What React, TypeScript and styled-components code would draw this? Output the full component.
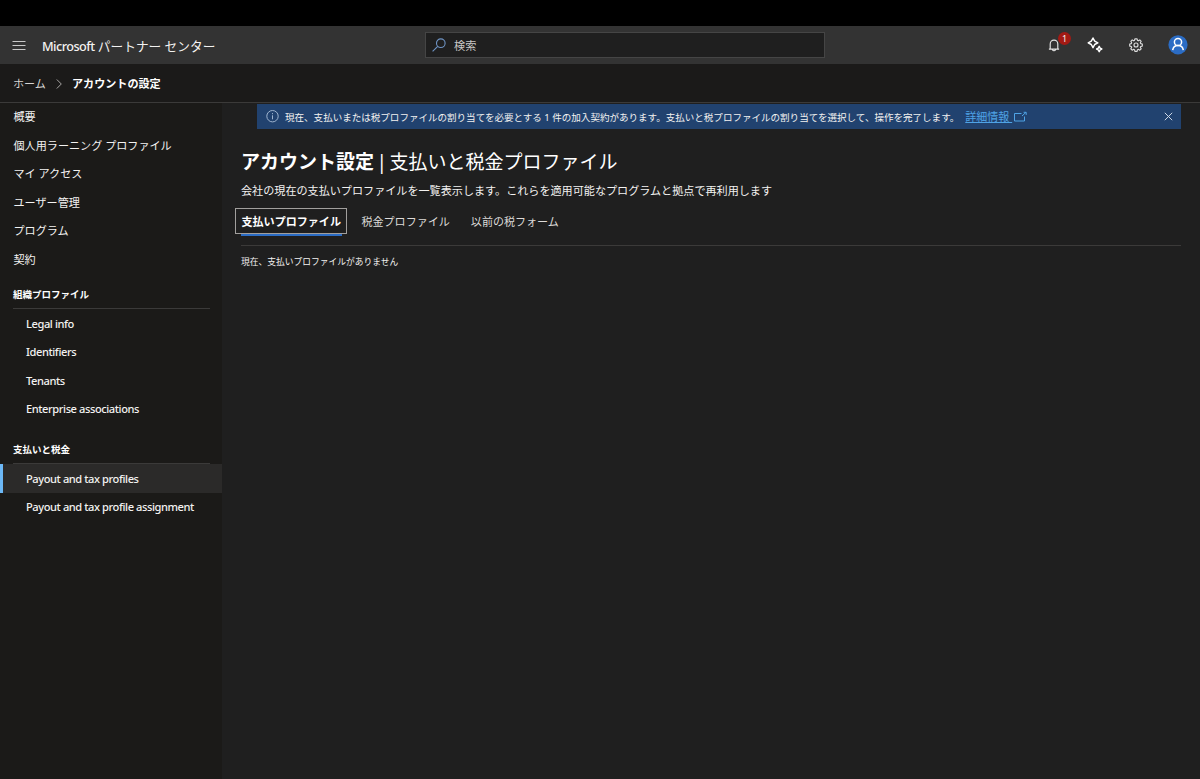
import React from "react";
import styled, { createGlobalStyle } from "styled-components";

const Global = createGlobalStyle`
  * { box-sizing: border-box; }
  html, body { margin: 0; padding: 0; background: #000; }
  body {
    font-family: "Noto Sans", "Noto Sans CJK JP", sans-serif;
    color: #f3f2f1;
    overflow: hidden;
  }
  svg { display: block; flex: none; }
`;

const Page = styled.div`
  width: 1200px;
  height: 779px;
  padding-top: 26px;
  display: flex;
  flex-direction: column;
  background: #000;
  white-space: nowrap;
`;

const Header = styled.header`
  height: 38px;
  flex: none;
  display: grid;
  grid-template-columns: 425px 400px 1fr;
  align-items: center;
  background: #333333;
`;

const Brand = styled.div`
  display: flex;
  align-items: center;
  gap: 16px;
  padding-left: 12px;
  font-size: 12.7px;
  line-height: 20px;

  > span { padding-top: 2px; }
`;

const Latin = styled.span<{ $track?: number }>`
  font-weight: 500;
  letter-spacing: ${(p) => p.$track ?? 0}px;
`;

const SearchBox = styled.div`
  height: 26px;
  display: flex;
  align-items: center;
  gap: 8px;
  padding-left: 6px;
  border: 1px solid #454545;
  background: #1f1f1f;
  color: #c8c6c4;
  font-size: 11.2px;
  line-height: 16px;

  > span { padding-top: 1px; }
`;

const Actions = styled.div`
  display: flex;
  align-items: center;
  justify-content: flex-end;
  padding-right: 12px;
`;

const Action = styled.div<{ $gap: number }>`
  position: relative;
  margin-left: ${(p) => p.$gap}px;
`;

const Badge = styled.span`
  position: absolute;
  left: 10px;
  top: -6px;
  width: 13px;
  height: 13px;
  border-radius: 50%;
  background: #a31a14;
  font-size: 9px;
  line-height: 13px;
  text-align: center;
`;

const Breadcrumb = styled.nav`
  height: 39px;
  flex: none;
  display: flex;
  align-items: center;
  gap: 9px;
  padding: 1px 0 0 13px;
  border-bottom: 1px solid #3b3a39;
  background: #1b1a19;
  font-size: 11.1px;
  line-height: 16px;
  color: #d6d4d2;

  strong { color: #ffffff; font-weight: 700; }
`;

const Body = styled.div`
  flex: 1;
  display: flex;
  min-height: 0;
`;

const Sidebar = styled.aside`
  width: 222px;
  flex: none;
  background: #1b1a18;
`;

const NavItem = styled.div<{ $nested?: boolean; $active?: boolean }>`
  height: 28.55px;
  display: flex;
  align-items: center;
  padding-left: ${(p) => (p.$nested ? 26 : 13.5)}px;
  padding-bottom: ${(p) => (p.$nested ? 0 : 2)}px;
  font-size: 11.1px;
  font-weight: ${(p) => (p.$nested ? 500 : 400)};
  letter-spacing: ${(p) => (p.$nested ? -0.42 : 0)}px;
  background: ${(p) => (p.$active ? "#2b2a29" : "transparent")};
  box-shadow: ${(p) => (p.$active ? "inset 3px 0 0 #6cb8f6" : "none")};
`;

const NavHeading = styled.div<{ $height: number }>`
  height: ${(p) => p.$height}px;
  margin: 0 12px 0 13px;
  padding-bottom: 5px;
  display: flex;
  align-items: flex-end;
  border-bottom: 1px solid #3b3a39;
  font-size: 9.5px;
  line-height: 16px;
  font-weight: 700;
  color: #fff;
`;

const Main = styled.main`
  flex: 1;
  padding: 1px 19px 0 19px;
  background: #1f1f1f;
`;

const Banner = styled.div`
  height: 25px;
  margin-left: 16px;
  padding: 0 8px 0 9px;
  display: flex;
  align-items: center;
  background: #21426f;
  font-size: 9.54px;
  line-height: 16px;
`;

const BannerText = styled.span`
  margin-left: 6px;
  padding-top: 2px;
`;

const BannerLink = styled.a`
  margin: 1px 2px 0 6px;
  font-size: 11px;
  color: #4fa3e6;
  text-decoration: underline;
  text-underline-offset: 1px;
  white-space: pre;
`;

const Spacer = styled.span`
  flex: 1;
`;

const Title = styled.h1`
  margin: 19px 0 0;
  font-size: 19px;
  line-height: 28px;
  font-weight: 400;
  word-spacing: -2.4px;
  color: #fff;

  b { font-weight: 700; }
`;

const Description = styled.p`
  margin: 6px 0 0;
  font-size: 11.1px;
  line-height: 18px;
`;

const Tabs = styled.div`
  height: 46px;
  padding-top: 8px;
  display: flex;
  align-items: flex-start;
  border-bottom: 1px solid #3b3a39;
`;

const Tab = styled.div<{ $active?: boolean; $gap?: number }>`
  position: relative;
  height: 26px;
  margin-left: ${(p) => p.$gap ?? 0}px;
  padding: 0 ${(p) => (p.$active ? 5.5 : 0)}px;
  border: ${(p) => (p.$active ? "1px solid #a19f9d" : "0")};
  font-size: 11.05px;
  line-height: ${(p) => (p.$active ? 25 : 27)}px;
  font-weight: ${(p) => (p.$active ? 700 : 400)};
  color: ${(p) => (p.$active ? "#fff" : "#dddbd9")};
`;

const TabUnderline = styled.span`
  position: absolute;
  left: 5px;
  right: 4px;
  bottom: -3px;
  height: 2px;
  background: #2b6cc4;
`;

const EmptyText = styled.p`
  margin: 8px 0 0;
  font-size: 8.75px;
  line-height: 16px;
`;

const MenuIcon = () => (
  <svg width="14" height="12" viewBox="0 0 14 12" stroke="#c8c8c8" strokeWidth="1">
    <path d="M.5 2.5h13M.5 6.5h13M.5 10.5h13" />
  </svg>
);

const SearchIcon = () => (
  <svg width="14" height="14" viewBox="0 0 14 14" fill="none" stroke="#6f94c4" strokeWidth="1.1">
    <circle cx="8.8" cy="5.2" r="4.3" />
    <path d="M5.7 8.3.6 13.4" />
  </svg>
);

const BellIcon = () => (
  <svg width="12" height="14" viewBox="0 0 12 14" fill="none" stroke="#e4e4e4" strokeWidth="1.15">
    <path d="M2.2 10.8V5.9a3.8 3.8 0 0 1 7.6 0v4.9M.9 11.1h10.2M4.4 11.6a1.7 1.7 0 0 0 3.2 0" />
  </svg>
);

const SparkleIcon = () => (
  <svg width="16" height="16" viewBox="0 0 16 16" fill="none" stroke="#fff" strokeWidth="1.5" strokeLinejoin="round">
    <path d="M6 1 7.7 4.1 10.8 5.8 7.7 7.5 6 10.6 4.3 7.5 1.2 5.8 4.3 4.1Z" />
    <path d="M12.2 9.4 13.1 11.1 14.8 12 13.1 12.9 12.2 14.6 11.3 12.9 9.6 12 11.3 11.1Z" />
  </svg>
);

const GearIcon = () => (
  <svg width="14" height="14" viewBox="0 0 14 14" fill="none" stroke="#dcdcdc" strokeWidth="1.15" strokeLinejoin="round">
    <path d="M5.9.8h2.2l.4 1.6.9.4 1.4-.9 1.4 1.4-.9 1.4.4.9 1.6.4v2.1l-1.6.4-.4.9.9 1.4-1.4 1.4-1.4-.9-.9.4-.4 1.6H5.9l-.4-1.6-.9-.4-1.4.9-1.4-1.4.9-1.4-.4-.9L.7 8.1V6l1.6-.4.4-.9-.9-1.4 1.4-1.4 1.4.9.9-.4Z" />
    <circle cx="7" cy="7" r="2" />
  </svg>
);

const AvatarIcon = () => (
  <svg width="20" height="20" viewBox="0 0 20 20" fill="none" stroke="#fff" strokeWidth="1.5">
    <circle cx="10" cy="9.8" r="9.6" fill="#2b6cc4" stroke="none" />
    <circle cx="10" cy="7" r="3.6" />
    <path d="M4.7 15.2c.4-2.9 2.5-4.6 5.3-4.6s4.9 1.7 5.3 4.6" />
  </svg>
);

const ChevronIcon = () => (
  <svg width="8" height="10" viewBox="0 0 8 10" fill="none" stroke="#a8a6a4" strokeWidth="1">
    <path d="M1.8.5 6.3 5 1.8 9.5" />
  </svg>
);

const InfoIcon = () => (
  <svg width="13" height="13" viewBox="0 0 13 13" fill="none" stroke="#9fb4cf" strokeWidth="1">
    <circle cx="6.5" cy="6.2" r="5.7" />
    <path d="M6.5 5.3v4M6.5 3.1v1.1" />
  </svg>
);

const ExternalIcon = () => (
  <svg width="13" height="11" viewBox="0 0 13 11" fill="none" stroke="#4fa3e6" strokeWidth="1">
    <path d="M7.5 2.5h-7v7.5h10V5.5M8 5 12 1.3M9.6 1.3h2.6v2.6" />
  </svg>
);

const CloseIcon = () => (
  <svg width="9" height="9" viewBox="0 0 9 9" stroke="#cdd8e6" strokeWidth="1">
    <path d="M.8.8l7.4 7.4M8.2.8.8 8.2" />
  </svg>
);

const topLinks = ["概要", "個人用ラーニング プロファイル", "マイ アクセス", "ユーザー管理", "プログラム", "契約"];
const orgLinks = ["Legal info", "Identifiers", "Tenants", "Enterprise associations"];
const payLinks = ["Payout and tax profiles", "Payout and tax profile assignment"];

export default function App() {
  return (
    <Page lang="ja">
      <Global />
      <Header>
        <Brand>
          <MenuIcon />
          <span><Latin $track={-0.55}>Microsoft</Latin> パートナー センター</span>
        </Brand>
        <SearchBox><SearchIcon /><span>検索</span></SearchBox>
        <Actions>
          <Action $gap={0}><BellIcon /><Badge>1</Badge></Action>
          <Action $gap={27}><SparkleIcon /></Action>
          <Action $gap={26}><GearIcon /></Action>
          <Action $gap={25}><AvatarIcon /></Action>
        </Actions>
      </Header>
      <Breadcrumb>
        <span>ホーム</span>
        <ChevronIcon />
        <strong>アカウントの設定</strong>
      </Breadcrumb>
      <Body>
        <Sidebar>
          {topLinks.map((t) => <NavItem key={t}>{t}</NavItem>)}
          <NavHeading $height={34.5}>組織プロファイル</NavHeading>
          {orgLinks.map((t) => <NavItem key={t} $nested>{t}</NavItem>)}
          <NavHeading $height={41}>支払いと税金</NavHeading>
          {payLinks.map((t, i) => <NavItem key={t} $nested $active={i === 0}>{t}</NavItem>)}
        </Sidebar>
        <Main>
          <Banner>
            <InfoIcon />
            <BannerText>現在、支払いまたは税プロファイルの割り当てを必要とする 1 件の加入契約があります。支払いと税プロファイルの割り当てを選択して、操作を完了します。</BannerText>
            <BannerLink>{"詳細情報 "}</BannerLink>
            <ExternalIcon />
            <Spacer />
            <CloseIcon />
          </Banner>
          <Title><b>アカウント設定</b> | 支払いと税金プロファイル</Title>
          <Description>会社の現在の支払いプロファイルを一覧表示します。これらを適用可能なプログラムと拠点で再利用します</Description>
          <Tabs>
            <Tab $active $gap={-6}>支払いプロファイル<TabUnderline /></Tab>
            <Tab $gap={14}>税金プロファイル</Tab>
            <Tab $gap={21}>以前の税フォーム</Tab>
          </Tabs>
          <EmptyText>現在、支払いプロファイルがありません</EmptyText>
        </Main>
      </Body>
    </Page>
  );
}
